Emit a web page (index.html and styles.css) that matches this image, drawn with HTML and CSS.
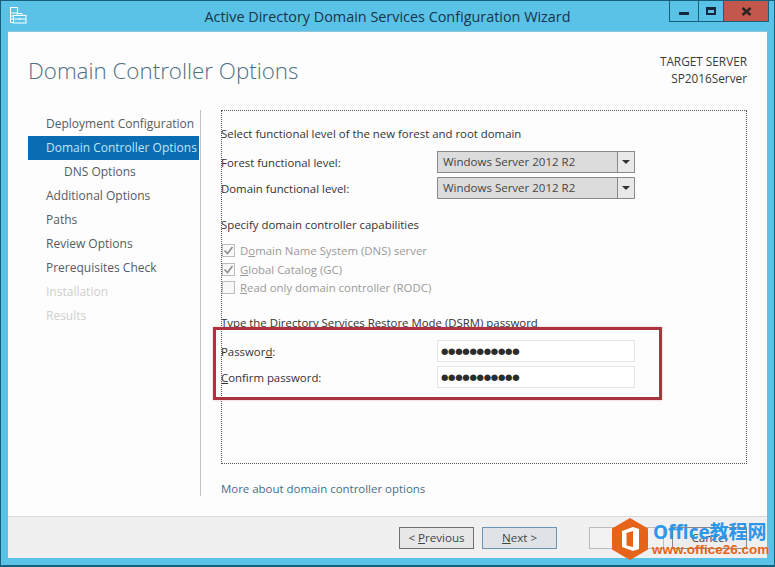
FILE: index.html
```html
<!DOCTYPE html>
<html lang="en">
<head>
<meta charset="utf-8">
<title>Active Directory Domain Services Configuration Wizard</title>
<link rel="stylesheet" href="styles.css">
</head>
<body>
<div class="window">
  <header class="titlebar">
    <svg class="app-icon" width="17" height="17" viewBox="0 0 17 17" fill="none" stroke="#fff" stroke-width="1">
      <rect x="0.500" y="0.500" width="7" height="5.500"/>
      <path d="M0.500 6V15.500H3M0.500 9H3M0.500 12H3"/>
      <rect x="3.500" y="8.500" width="12.500" height="7.500" fill="#5bc2e7"/>
      <path d="M7 8.500V6.500H12V8.500M3.500 12H16M9.500 11V13"/>
    </svg>
    <div class="title">Active Directory Domain Services Configuration Wizard</div>
    <div class="controls">
      <div class="ctl ctl-min"><span class="min-glyph"></span></div>
      <div class="ctl ctl-max"><span class="max-glyph"></span></div>
      <div class="ctl ctl-close"><svg width="11" height="9" viewBox="0 0 11 9"><path d="M1.500 1L9.500 8M9.500 1L1.500 8" stroke="#2a2326" stroke-width="2.400"/></svg></div>
    </div>
  </header>
  <main class="client">
    <div class="head">
      <h1 class="page-title">Domain Controller Options</h1>
      <div class="target"><div>TARGET SERVER</div><div>SP2016Server</div></div>
    </div>
    <div class="body">
      <nav class="nav">
        <div class="nav-item">Deployment Configuration</div>
        <div class="nav-item active">Domain Controller Options</div>
        <div class="nav-item sub">DNS Options</div>
        <div class="nav-item">Additional Options</div>
        <div class="nav-item">Paths</div>
        <div class="nav-item">Review Options</div>
        <div class="nav-item">Prerequisites Check</div>
        <div class="nav-item off">Installation</div>
        <div class="nav-item off">Results</div>
      </nav>
      <section class="content">
        <div class="panel">
          <p class="label-line first">Select functional level of the new forest and root domain</p>
          <div class="field-row combo-row">
            <span class="field-label">Forest functional level:</span>
            <div class="combo"><span class="combo-text">Windows Server 2012 R2</span><span class="combo-btn"><i class="arrow"></i></span></div>
          </div>
          <div class="field-row combo-row">
            <span class="field-label">Domain functional level:</span>
            <div class="combo"><span class="combo-text">Windows Server 2012 R2</span><span class="combo-btn"><i class="arrow"></i></span></div>
          </div>
          <p class="label-line caps">Specify domain controller capabilities</p>
          <div class="check"><span class="box"><svg width="11" height="11" viewBox="0 0 11 11"><path d="M1.500 5.500L4.500 8.500L9.500 2" fill="none" stroke="#8d8d8d" stroke-width="1.600"/></svg></span><span>D<u>o</u>main Name System (DNS) server</span></div>
          <div class="check"><span class="box"><svg width="11" height="11" viewBox="0 0 11 11"><path d="M1.500 5.500L4.500 8.500L9.500 2" fill="none" stroke="#8d8d8d" stroke-width="1.600"/></svg></span><span><u>G</u>lobal Catalog (GC)</span></div>
          <div class="check"><span class="box"></span><span><u>R</u>ead only domain controller (RODC)</span></div>
          <p class="label-line dsrm">Type the Directory Services Restore Mode (DSRM) password</p>
          <div class="field-row pw-row">
            <span class="field-label">Passwor<u>d</u>:</span>
            <div class="pw">●●●●●●●●●●●</div>
          </div>
          <div class="field-row pw-row">
            <span class="field-label"><u>C</u>onfirm password:</span>
            <div class="pw">●●●●●●●●●●●</div>
          </div>
        </div>
        <a class="more">More about domain controller options</a>
      </section>
    </div>
    <footer class="footer">
      <div class="btn">&lt; <u>P</u>revious</div>
      <div class="btn btn-next"><u>N</u>ext &gt;</div>
      <div class="btn btn-install"></div>
      <div class="btn btn-cancel">Cancel</div>
    </footer>
  </main>
  <div class="highlight"></div>
  <div class="watermark">
    <svg class="wm-logo" width="36" height="42" viewBox="0 0 36 42">
      <path d="M18 0L36 10.500V31.500L18 42L0 31.500V10.500Z" fill="#e5641a"/>
      <path d="M21 9L10 13V29L21 33L27 31V11ZM21 13V29L14.500 27.500V15Z" fill="#fff" fill-rule="evenodd"/>
    </svg>
    <div class="wm-text">
      <div class="wm-top">Office教程网</div>
      <div class="wm-url">www.office26.com</div>
    </div>
  </div>
</div>
</body>
</html>
```
FILE: styles.css
```css
* { box-sizing: border-box; }
html, body { margin: 0; padding: 0; }
body { width: 775px; height: 567px; overflow: hidden; font-family: "Open Sans", "Noto Sans", sans-serif; font-size: 12px; }
p, h1 { margin: 0; }

.window { position: relative; width: 775px; height: 567px; background: #5bc2e7; border: 1px solid #17607c; border-bottom-width: 2px; display: flex; flex-direction: column; }

.titlebar { height: 30px; flex: none; display: flex; align-items: flex-start; position: relative; }
.app-icon { position: absolute; left: 9px; top: 6px; }
.title { width: 100%; text-align: center; padding-top: 6px; font-size: 14.400px; line-height: 20px; color: #17344a; }
.controls { position: absolute; right: 5px; top: 0; display: flex; height: 21px; }
.ctl { height: 21px; display: flex; align-items: center; justify-content: center; border-bottom: 1px solid #17607c; }
.ctl-min { width: 30px; border-left: 1px solid #17607c; border-right: 1px solid #17607c; }
.ctl-max { width: 25px; border-right: 1px solid #17607c; }
.ctl-close { width: 45px; background: #c4574b; border-bottom-color: #17607c; border-right: 1px solid #17607c; }
.min-glyph { width: 10px; height: 3px; background: #14283a; margin-top: 5px; }
.max-glyph { width: 10px; height: 8px; border: 2px solid #14283a; border-top-width: 3px; margin-top: -1px; }

.client { flex: 1; margin: 0 7px 7px; background: #fdfdfd; display: flex; flex-direction: column; min-height: 0; border-top: 1px solid #8fc6d8; }

.head { height: 78px; flex: none; display: flex; justify-content: space-between; align-items: flex-start; }
.page-title { margin: 19px 0 0 20px; font-size: 22.350px; line-height: 40px; font-weight: 300; color: #4d6f84; font-family: "Open Sans", sans-serif; }
.target { margin: 21px 20px 0 0; text-align: right; font-size: 11.800px; line-height: 16.500px; color: #3a3a3a; }

.body { flex: 1; display: flex; min-height: 0; }
.nav { width: 193px; flex: none; height: 386px; border-right: 1px solid #c3c3c3; padding-top: 2px; margin-right: 20px; }
.nav-item { height: 24px; margin-left: 20px; padding-left: 18px; line-height: 24px; font-size: 12px; color: #555b61; white-space: nowrap; }
.nav-item.active { background: #0a6cb3; color: #bfe6f7; overflow: hidden; margin-right: 1px; }
.nav-item.sub { padding-left: 36px; }
.nav-item.off { color: #cfcfcf; }

.content { flex: 1; min-width: 0; }
.panel { width: 526px; height: 354px; outline: 1px dotted #555; outline-offset: -1px; font-size: 11.400px; color: #333; }
.panel::before { content: ""; display: block; height: 14px; }
.label-line { height: 20px; line-height: 20px; white-space: nowrap; }
.field-row { display: flex; align-items: center; white-space: nowrap; }
.field-label { width: 216px; flex: none; }
.combo-row { height: 22px; }
.label-line.first + .combo-row { margin-top: 7px; }
.combo-row + .combo-row { margin-top: 4px; }
.combo { width: 198px; height: 22px; background: #dcdcdc; border: 1px solid #8a8a8a; display: flex; align-items: stretch; color: #444; font-size: 11.500px; }
.combo-text { flex: 1; padding-left: 5px; line-height: 20px; }
.combo-btn { width: 17px; flex: none; background: #e9e9e9; border-left: 1px solid #8a8a8a; display: flex; align-items: center; justify-content: center; }
.arrow { width: 0; height: 0; border: 4px solid transparent; border-top: 4px solid #333; border-bottom: 0; }

.label-line.caps { margin-top: 16px; }
.check { height: 18.500px; display: flex; align-items: center; gap: 5px; padding-top: 1px; color: #9a9a9a; white-space: nowrap; }
.box { width: 13px; height: 13px; border: 1px solid #bdbdbd; background: #f8f8f8; flex: none; display: flex; align-items: center; justify-content: center; margin-left: 1px; }
.box svg { flex: none; }
.label-line.caps + .check { margin-top: 6px; }
.label-line.dsrm { margin-top: 16.500px; }
.pw-row { height: 22px; }
.pw-row + .pw-row { margin-top: 4px; }
.label-line.dsrm + .pw-row { margin-top: 7px; }
.pw { width: 198px; height: 22px; background: #fff; border: 1px solid #e5e5e5; padding-left: 3px; font-size: 8.500px; line-height: 20px; color: #2c2c2c; letter-spacing: -0.300px; font-family: "DejaVu Sans", sans-serif; }

.more { display: block; margin-top: 15px; font-size: 11.450px; line-height: 20px; color: #3f6f8f; }

.footer { height: 42px; flex: none; background: #f0f0f0; border-top: 1px solid #d9d9d9; display: flex; align-items: center; padding-left: 391px; padding-top: 1px; font-size: 11.600px; }
.btn { width: 75px; height: 22px; border: 1px solid #707070; background: #e7e7e7; text-align: center; line-height: 20px; color: #444; margin-right: 8px; flex: none; }
.btn-next { border-color: #6a93b5; background: #dfe3e8; margin-right: 32px; }
.btn-install { border-color: #bcbcbc; background: #f2f2f2; margin-right: 8px; }
.btn-cancel { border-color: #8a8a8a; background: #ededed; margin-right: 0; }

.highlight { position: absolute; left: 212px; top: 326px; width: 449px; height: 73px; border: 3px solid #ab343e; box-shadow: 0 0 2px rgba(176, 52, 62, .35); pointer-events: none; }

.watermark { position: absolute; left: 611px; top: 517px; width: 160px; height: 45px; display: flex; align-items: flex-start; }
.wm-logo { flex: none; }
.wm-text { margin-left: 5px; padding-top: 2px; }
.wm-top { font-family: "Open Sans", "Noto Sans CJK SC", sans-serif; font-weight: 700; font-size: 19px; line-height: 24px; color: #2c97e8; white-space: nowrap; }
.wm-url { font-family: "Liberation Sans", sans-serif; font-weight: 700; font-size: 13.500px; line-height: 14px; color: #e5641a; white-space: nowrap; margin: -1px 0 0 -1px; }
```
